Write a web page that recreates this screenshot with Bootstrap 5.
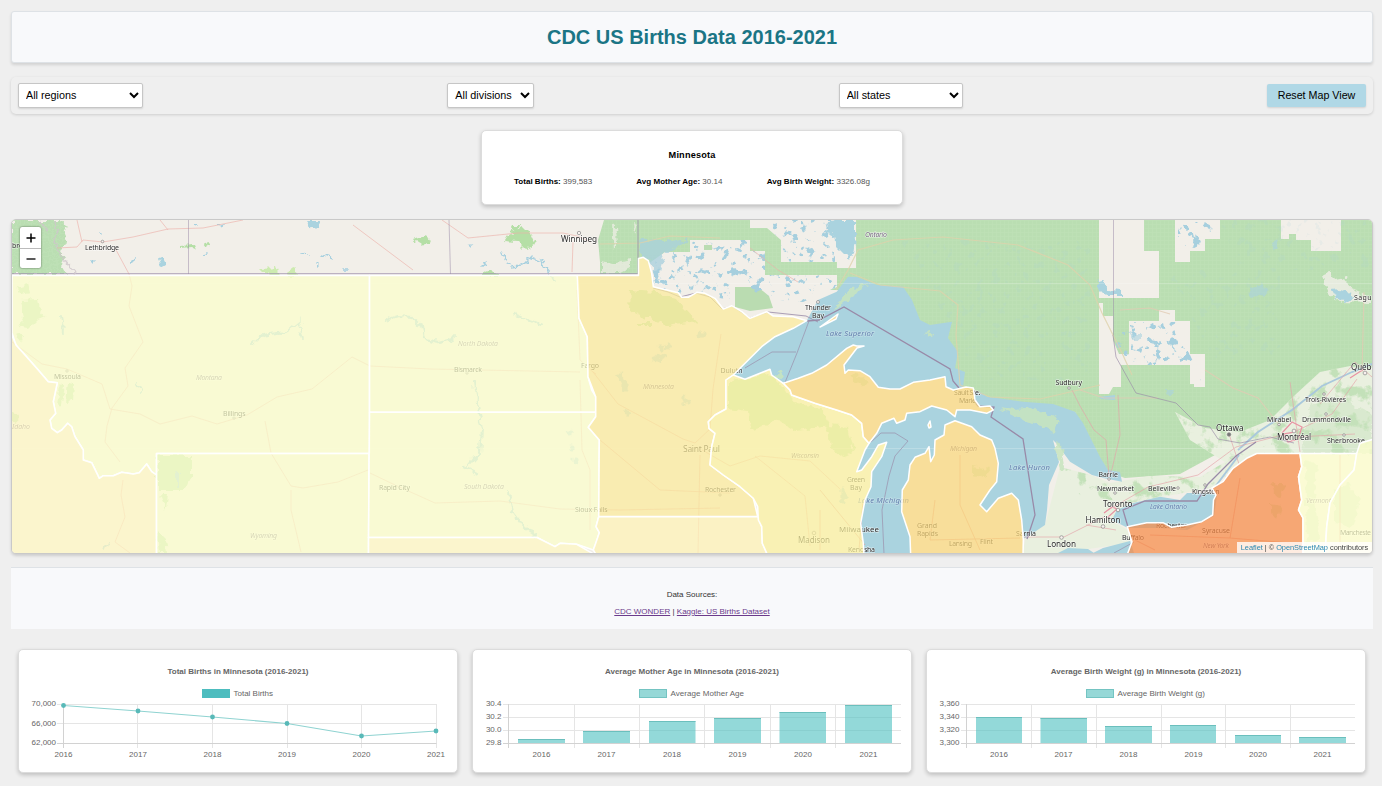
<!DOCTYPE html>
<html lang="en">
<head>
<meta charset="utf-8">
<meta name="viewport" content="width=device-width, initial-scale=1">
<title>CDC US Births Data 2016-2021</title>
<link href="https://cdn.jsdelivr.net/npm/bootstrap@5.3.0/dist/css/bootstrap.min.css" rel="stylesheet">
<style>
  body { background:#efefef; font-family:"Liberation Sans",Arial,sans-serif; padding:11px 9px 0 11px; color:#333; overflow:hidden; height:786px; }
  .page-head { height:52px; background:#f8f9fb; border:1px solid #dee2e6; border-radius:3px; box-shadow:0 2px 3px rgba(0,0,0,.12); }
  .page-head h1 { font-size:20px; font-weight:700; color:#1b7585; }
  .filters { height:37px; margin-top:14px; padding:0 7px; border-radius:5px; box-shadow:0 1px 3px rgba(0,0,0,.14); }
  .filters select { height:25px; border:1px solid #c6c6c6; border-radius:2px; background:#fff; font-size:10.8px; color:#000; padding:0 3px 1px; box-shadow:0 1px 2px rgba(0,0,0,.12); }
  .reset-btn { width:99px; height:23px; background:#b0d8e6; border-radius:2px; font-size:10.7px; color:#000; box-shadow:0 1px 2px rgba(0,0,0,.12); }
  .panel { background:#fff; border:1px solid #dcdcdc; border-radius:5px; box-shadow:0 2px 4px rgba(0,0,0,.2); }
  .state-info { width:422px; height:75px; margin-top:16px; padding:18px 32px 0; font-size:8.05px; }
  .state-info h2 { font-size:9.2px; font-weight:700; color:#000; letter-spacing:.15px; line-height:12px; margin-bottom:15px; }
  .state-info b { color:#000; }
  .state-info span { color:#555; line-height:12px; }
  .map-frame { height:335px; margin-top:14px; border:1px solid #c9c9c9; border-radius:5px; background:#f2efe9; box-shadow:0 2px 3px rgba(0,0,0,.14); }
  .map-frame > svg { width:100%; height:100%; }
  .map-frame text { font-family:"Noto Sans",sans-serif; }
  .zoomer { left:8px; top:7px; width:21px; border-radius:2px; box-shadow:0 0 2px rgba(0,0,0,.6); background:#fff; }
  .zoomer span { height:21px; }
  .zoomer span + span { height:20px; border-top:1px solid #bbb; }
  .zoomer svg { width:10px; height:10px; }
  .attribution { right:0; bottom:0; width:135px; height:11px; line-height:11px; font-size:7.4px; letter-spacing:-.03px; background:rgba(255,255,255,.78); color:#444; white-space:nowrap; }
  .attribution a { color:#2a86b0; text-decoration:none; }
  .sources { height:62px; margin-top:13px; background:#f8f9fb; border-top:1px solid #dee2e6; font-size:8px; line-height:17px; padding-top:18px; }
  .sources a { color:#6b3a8b; }
  .charts { margin:20px 7px 0; gap:14px; }
  .chart-card { height:124px; min-width:0; }
  .chart-card svg { display:block; width:438px; height:122px; }
  .chart-card text { font-family:"Liberation Sans",Arial,sans-serif; font-size:8px; fill:#666; }
</style>
</head>
<body>
<header class="page-head d-flex align-items-center justify-content-center"><h1 class="m-0">CDC US Births Data 2016-2021</h1></header>

<section class="filters d-flex align-items-center justify-content-between">
  <select style="width:125px" aria-label="Region"><option>All regions</option></select>
  <select style="width:87px" aria-label="Division"><option>All divisions</option></select>
  <select style="width:124px" aria-label="State"><option>All states</option></select>
  <button class="btn reset-btn border-0 p-0" type="button">Reset Map View</button>
</section>

<section class="panel state-info mx-auto text-center">
  <h2>Minnesota</h2>
  <div class="d-flex justify-content-between">
    <span><b>Total Births:</b> 399,583</span><span><b>Avg Mother Age:</b> 30.14</span><span><b>Avg Birth Weight:</b> 3326.08g</span>
  </div>
</section>

<section class="map-frame position-relative overflow-hidden">
<svg viewBox="12 220 1360 333" preserveAspectRatio="none" class="d-block">
  <defs>
    <pattern id="weave" width="4" height="4" patternUnits="userSpaceOnUse"><rect width="4" height="4" fill="#badeb2"/><path d="M0 .5H4M.5 0V4" stroke="#bfe0b7" stroke-width=".6"/></pattern>
    <filter id="lakes" x="0" y="0" width="1" height="1" color-interpolation-filters="sRGB">
      <feTurbulence type="fractalNoise" baseFrequency=".13" numOctaves="3" seed="7"/>
      <feColorMatrix values="0 0 0 0 .65  0 0 0 0 .81  0 0 0 0 .87  14 0 0 0 -8.400"/>
      <feComposite in2="SourceAlpha" operator="in"/>
    </filter>
    <filter id="clearings" x="0" y="0" width="1" height="1" color-interpolation-filters="sRGB">
      <feTurbulence type="fractalNoise" baseFrequency=".07" numOctaves="5" seed="3"/>
      <feColorMatrix values="0 0 0 0 .73  0 0 0 0 .87  0 0 0 0 .69  7 0 0 0 -3.700"/>
      <feComposite in2="SourceAlpha" operator="in"/>
    </filter>
    <filter id="rough" x="-.1" y="-.1" width="1.200" height="1.200">
      <feTurbulence type="fractalNoise" baseFrequency=".15" numOctaves="2" seed="4"/>
      <feDisplacementMap in="SourceGraphic" scale="9" xChannelSelector="R" yChannelSelector="G"/>
    </filter>
    <path id="wi" d="M733.300 375L745 379.300 770 369.300 771.700 375 783.300 383.300 790 390 791.700 395 815 403.300 836.700 410 851.700 415 861.700 423.300 863.300 436.700 869 443.300 865 450 856.700 471.700 861.700 470 871.700 456.700 878.300 445 886.700 442.300 881.700 456.700 871.700 471.700 871 486.700 865 500 860.700 523.300 863.300 543.300 864 556H768L762.300 543.300 761.700 526.700 758.300 520 757.700 506.700 753.300 498.300 740 486.700 723.300 475 710 465 711.700 446.700 715 433.300 709 428.300 708.300 421.700 715 415 726 409V380Z"/>
    <path id="up" d="M783.300 383.300L798.300 378.300 811.700 373.300 826.700 365 846.700 348.300 853.300 345 856.700 346 864 346 857 348 844 365 845 373.300 848.300 370 860 370.700 870 376.700 878.300 387.300 890 389H900L913.300 382.300 930 380 945 376.700 946 386.700 953.300 390 966 387 973.300 388 975 400 980 406.700 990 406 993.300 410 986.700 413.300 970 410H956.700L955 416.700 946.700 410 931.700 406 920 411.700 906.700 413.300 905 420 896.700 423.300 894 418.300 881.700 423.300 876.700 433.300 869 443.300 863.300 436.700 861.700 423.300 851.700 415 836.700 410 815 403.300 791.700 395 790 390Z"/>
    <path id="lp" d="M910.700 556L910 536.700 901.700 511.700 902.300 490 908.300 480 910 465 915 457.300 925 453.300 929 446.700 930.700 461.700 934.300 455 935 440 944 435 945 425 955 420.700 971.700 426.700 980 435 991.700 440 995 448.300 998.300 463.300 996.700 481.700 990 490 980 505 986.700 511.700 998.300 498.300 1011.700 493.300 1018.300 500 1021.700 520 1023.300 540 1023 556ZM820 327L838 314 836 319 822 326ZM928 425l2-4 1 6-2 1z"/>
    <path id="mn" d="M577.300 275.500H638.500V258.500L643.300 257.300 648.300 260.700 651.700 273.300 653.300 286.700 666.700 290 678.300 292.700 681.700 297.300H688.300L696.700 292.300 705 293.300 715 298.300 723.300 309 731.700 305.700 741.700 311.700 750 318.300 766.700 311.700 773.300 316 793.300 316.700 806.700 320.700 793.300 328.300 775 336.700 761.700 346.700 743.300 365 733.300 375 726 380V409L715 415 708.300 421.700 709 428.300 715 433.300 711.700 446.700 710 465 723.300 475 740 486.700 753.300 498.300 757.700 516.500H598.700L599.300 440 588.300 427.300 595.700 416.700V396.700L588 376.700 587.300 336.700 579 318.300Z"/>
  </defs>
  <rect x="12" y="220" width="1360" height="333" fill="#f2efe9"/>
  <!-- forests -->
  <g fill="url(#weave)">
    <path d="M12 220H60L67 226 63 235 67 243 60 250 65 258 63 267 67 274H12Z" filter="url(#rough)"/>
    <path d="M604 220H1372V368L1330 374 1305 400 1290 420 1262 440 1240 455 1225 444 1190 428 1215 455 1180 474 1125 478 1100 470 1075 412 960 397 850 290H640V274H600V262L598 240Z"/>
  </g>
  <g fill="#f2efe9">
    <path d="M1099 220H1144V251H1159V298H1099Z"/>
    <path d="M1175 220H1220V239H1205V251H1190V262H1175Z"/>
    <path d="M1281 220H1341V251H1311V240H1296V234H1289V239H1281Z"/>
    <path d="M1099 303H1103V316H1113V340L1119 354H1129V321H1159V310H1175V321H1190V354H1205V387H1194V384H1190V365H1121V387H1113L1109 394H1099Z"/>
    <path d="M1322 276L1330 272 1335 280 1345 278 1352 290 1372 298V303L1340 302 1330 294Z" opacity=".8" filter="url(#rough)"/>
    <path d="M750 220H856V268H837V262H781V240L767 228H750Z"/>
    <path d="M648 264L665 252H690V240H750V251H765V275H837V287L813 297 803 302V325H735L640 310V274Z"/>
    <path d="M612 224l4 2 2 16-4 8zM634 222l4 2-3 10zM602 262l12 2 16-4v8l-10 5h-18z" opacity=".7" filter="url(#rough)"/>
  </g>
  <path d="M735 287H758L769 296 773 308 750 311 735 307ZM704 245h8v5h-8z" fill="#badcb1"/>
  <path d="M645 264L665 252H690V240H750V251H765V275H837V287L803 302 780 300 735 286V300L653 290ZM775 220H835V262H790L770 230Z" filter="url(#lakes)"/>
  <path d="M1178 222H1215V238L1190 250H1178ZM1115 340L1131 322H1175L1190 355 1204 385 1190 365H1121Z" filter="url(#lakes)"/>
  <path d="M900 240H1090V380H980ZM1165 270H1280V360H1215ZM1220 220H1370V270H1240Z" filter="url(#lakes)" opacity=".12"/>
  <path d="M640 238L672 242 690 238 664 254 656 284 652 262 641 256Z" fill="#a8d0de" opacity=".75" filter="url(#rough)"/>
  <g fill="#e9f0df">
    <path d="M1060 467L1091 475 1110 483 1150 476 1200 477 1225 462 1190 440 1175 412 1205 428 1240 432 1270 420 1295 395 1320 372 1350 366 1372 370V445L1356 454H1255L1230 470 1215 487 1130 503 1110 520 1128 530 1130 543 1040 556H1022L1026 536 1045 525Z"/>
  </g>
  <path d="M1060 467L1091 475 1110 483 1150 476 1200 477 1225 462 1190 440 1175 412 1205 428 1240 432 1270 420 1295 395 1320 372 1350 366 1372 370V454H1255L1215 487 1130 503 1080 495Z" filter="url(#clearings)" opacity=".8"/>
  <path d="M1310 405L1335 395 1372 415V453H1302Z" fill="#c7e2bc" opacity=".45" filter="url(#rough)"/>
  <!-- small woods and parks -->
  <g fill="#b5dfa6" filter="url(#rough)">
    <path d="M414 239l8-3 8 3-2 5-10 1zM481 275q9-8 19 0v2h-19zM508 235l15-8 8 8 4 9-10 5-8-8-12-1zM510 225h10l-2 6h-5z"/>
    <path d="M181 246l14-1 2 5-6-3-10 1zM204 244l4-1-1 5z"/><path d="M261 268l15-1 3 9-9 1zM287 271l8-3 3 9h-9z" fill="#cdebb0"/>
    <path d="M630 288l25 2 20 6 22 26-30 4-24-10-14-6zM636 322h14v3h-14z" opacity=".85"/>
    <path d="M17 288l10-3 2 8-8 2zM20 300l18-1 2 12 6 7-10 2-8 8-9-1 4-8zM16 334q5-3 8 3-2 5-6 3zM60 383l5 3-4 22-4-5zM68 383l6 1-1 16-7 4zM158 455h33v20l-6 14h-27zM12 411l6 2-1 10-5-2zM160 495h8l-2 14zM157 531l8 8 2 14h-8z" opacity=".8"/>
  </g>
  <!-- water -->
  <g fill="#aad3df">
    <path d="M724 382L735 360 765 335 806.700 320.700 818 300 836.700 291.700 848 276.700 857 277 877 285 903 286.700 912 300 920 320 930 325 952 321.700 948 338 958 352 955 368 965 372 963 387 980 392 987 396.700 1023 401.700 1053 404 1075 411.700 1083 423 1100 457 1108 470 1120 472 1122 481.700 1103 478 1092 475 1070 461.700 1057 444 1053 440 1059 462 1049 485 1047 510 1045 525 1030 535 1026 538 1010 540 940 556H856L850 470 800 400Z"/>
    <path d="M1111.700 520L1117 510 1133 503 1160 496.700 1180 500 1187 493 1207 493 1217 495 1214 516 1187 530 1157 528 1128 528Z"/>
    <path d="M1093 553L1103 548 1130 541 1134 553ZM1058 553l10-5 20 1 6 4z"/>
    <path d="M1099 397l16-2v5l-14-1z"/>
    <path d="M830 222l7-2h18v18l-2 16-5 6-4-6-6-6-4-14-8-2zM1332 290l8-1 11 3 2 6-6 4-10-3zM1097 281l7-1 4 9 14 2v5h-16l-9-9zM306 221h13l-1 8-7-1zM158 260l4-2 3 6-5 3z" filter="url(#rough)"/>
    <path d="M1250 288l14-4 6 8-12 6-10-2zM1270 244l8-3-2 8zM1132 334h9v5l-9 1zM1165 390h10v4h-8z" opacity=".6" filter="url(#rough)"/>
  </g>
  <g fill="#f2efe9"><use href="#mn"/><use href="#wi"/><use href="#up"/><use href="#lp"/></g>
  <g fill="#b5dfa6" filter="url(#rough)">
    <path d="M630 290l25 2 20 6 22 24-30 4-24-10-14-6zM638 323h14v3h-14z" opacity=".85"/>
    <path d="M728 382l42-9 10 10 15 20 25 5 10 18-35 5-15-10-30 10-2-20-20-3zM828 425l20 2 6 24-14 6-10-8z" opacity=".7"/>
    <path d="M850 374l10 2 10 7-14 2zM1272 482l14 3-6 12-6-4zM1270 504l12 2-4 12-8-5zM972 466l18 3-6 8-12-3z" opacity=".5"/>
    <path d="M1305 460l12 3-2 35 4 40-12 8zM1335 490l14-6 12 16-10 28-16-6z" opacity=".35"/>
  </g>
  <g stroke="#a7d0df" fill="none" stroke-linecap="round" filter="url(#rough)">
    <path d="M502 252l8 14 12-1 8-8 10 4 10 12 4 8M482 266l5-2M470 246l2-3" stroke-width="1.600"/>
    <path d="M302 254l6 1M322 255l10 4M316 265l1 1M342 269h6M207 254l-4 1M132 262l3-2M94 261l-2 2M100 232l1 1M195 225l3 1M218 225l5-2" stroke-width="1.700"/>
    <path d="M386 320l12-4 14 1 10 10 2 12 16 3 16-4M420 323l3 8M515 314l12 5 14 6M474 382l4 26 4 22-2 22-12 14M462 466l16 8M508 492l5 20 12 16 12 8" stroke-width="2.200"/>
    <path d="M252 344l10-9 24-3 14-11-2 5 5 12M136 382l6 10M62 316l2 16M104 550l4-10M178 472v14" stroke-width="2"/>
    <path d="M658 358l5-2M660 348h2M668 346h1M620 376l6 12M684 398l2 4M626 412h4M570 432v2M572 448v1M575 460h1M843 490v10M700 334h4M655 360h2" stroke-width="5" opacity=".7"/>
  </g>
  <path d="M1238 450l20-18 34-22 30-24 30-14 20-8M1215 487l24-32" stroke-width="1.900" stroke="#a9c8dc" fill="none"/>
  <path d="M842 298l10-11 20-3-14 5-6 8-18 14zM1000 408l15 2 20-2 24 12-4 14-14-9-18-5zM775 375l7-4 3 5-7 3zM922 333l10-1-2 3zM1055 442l6 3 4 20-5 6z" fill="#c8e4bf" opacity=".85" filter="url(#rough)"/>
  <path d="M12 283.500H1372M12 448.500H1372" stroke="#fff" stroke-width=".6" opacity=".35"/>
  <!-- roads -->
  <g fill="none" stroke="#ecb1aa" stroke-width=".8" opacity=".8">
    <path d="M57 248l20-1 6-7 20 2 30-5 35-8 35-1 40-8M77 220l5 22M160 220l8 10M115 248l14 26 3 12-3 20 14 36-18 26 3 18-16 22-5 18-2 16 15 20M12 342l30 22 25 5 35 15 8 25 30 5 20 10 32-8 25 8 30-9 30-18 35-8 40-32 18 9 60 3 150 3M442 220l26 18 50-5 45 0 14 3 14 6M573 242l-1 30M353 225l60 45M577 290l3 70 13 12 25 32 65 35 12 4 15-14 3-40 8-55M580 380l2 70 8 20v60M370 473l25 12 40 18 65-2 60 8 60 1 100-2M265 421l6 32 20 33 12 2 35-6 30-12M291 490v20l10 42M593 372l3 2M700 455l-2 98M702 450l28 16 30-10 50 5 30 28M755 456l50 40 5 50M600 440l60 50 70 3M123 480l-2 15 4 22-10 25 15 11M750 248l28 22 20 12"/>
    <path d="M600 244l40-1 30-7 50 2M836 290l12-20 10-20 35-10 50-3 75 8 50 20 22 20 12 28 20 40 10 22M850 273l30 12 60 6 18 14-2 30 4 50 30 12 50 2 60-14" stroke="#dfd2ac" stroke-width="1.200"/>
    <path d="M1080 390l24 8 14 0 40 0M1120 310l30-2 20 6M1205 370l28 18 25 10 22 28M1362 372l2-80" stroke="#e2cbb4" stroke-width="1.100"/>
    <path d="M1072 390l8 16 14 24 12 10 3 36M1118 395l2 40-8 34-4 8M1229 434l10 30M1108 510l40-23 50-12 38-28 58-15 38-18 25-35M1086 525l30 5M1024 537h40l40-20M1295 437l60-3M1300 452l-10-70M1320 404l35-42 17 15" stroke="#e5a2a8"/>
    <path d="M820 490l45 55M863 500l-4 50M960 455v50l20 45M935 500l-5 40 90-2M1150 535l80 3 60 5M1230 538l10-60M1135 540l20 10M820 510v40M1340 455v98" stroke="#e5958a"/>
  </g>
  <path d="M1282 433l10-11 10 5-4 12-10 3-5-8 12-2M1104 513l8-6 5 2-10 9M1350 378l14-9" fill="none" stroke="#e892a2" stroke-width="1.200"/>
  <g fill="none" stroke="#998aa8" stroke-width="1">
    <path d="M12 273.700H638V220" opacity=".75"/><path d="M188.500 220V274M449 220l1.500 54M1113.500 220V335" opacity=".5"/><path d="M1113 335l3 22 20 36 40 10 22 22 12 2 8 12 22 4 30-6 24 6" opacity=".65"/>
    <path d="M653 288l15 4 12 5 16-4 14 4 12 12 10-3 18 12 18-6 38 4 12 6" opacity=".8"/>
    <path d="M807 321l12-1 25-13 106 62 3 12 6 7M973 400l5 6 16 1-3 10 32 22 12 76-8 24M1128 527l-5-17 22-9h52l11-17 28-28 20-14" stroke-width="1.300"/>
    <path d="M745 368l27-16h24M809 321l-12 32-13 32M871 442l10-9h14l13 8-13 15-6 20-7 34 2 44M1134 542l-20 11" opacity=".65"/>
  </g>
  <path d="M56 220l2 12-4 10 8 14 14 18M40 220l8 12" fill="none" stroke="#cfc6cb" stroke-width="1.500" opacity=".8" filter="url(#rough)"/>
  <!-- settlements -->
  <g fill="#f8f1ee" stroke="#888" stroke-width=".7">
    <circle cx="102.500" cy="241.500" r="1.300"/><circle cx="579" cy="233" r="1.700"/><circle cx="818" cy="302" r="1.500"/><circle cx="1069" cy="388" r="1.300"/><circle cx="1229" cy="434.500" r="1.800" fill="#777"/><circle cx="1294" cy="431" r="1.900"/><circle cx="1365" cy="373" r="1.900"/><circle cx="1118" cy="510" r="1.800"/><circle cx="1103" cy="526.500" r="1.800"/><circle cx="1061.500" cy="537.500" r="1.800"/><circle cx="1109" cy="479" r="1.300"/><circle cx="1115" cy="493" r="1.300"/><circle cx="1178" cy="488" r="1.300"/><circle cx="1205" cy="485" r="1.300"/><circle cx="1324" cy="394" r="1.300"/><circle cx="1326" cy="414" r="1.300"/><circle cx="1344" cy="435" r="1.300"/><circle cx="1279" cy="424.500" r="1.300"/><circle cx="814" cy="533" r="1.800"/><circle cx="720" cy="495" r="1.200"/><circle cx="467" cy="373" r="1.200"/><circle cx="234" cy="418" r="1.200"/><circle cx="67" cy="371" r="1.200"/>
  </g>
  <g fill="#2b2b2b" stroke="#fff" stroke-opacity=".65" stroke-width="1.200" paint-order="stroke" font-size="7">
    <text x="12" y="248">bro</text><text x="85" y="250" textLength="34">Lethbridge</text><text x="561" y="242" font-size="8.200" textLength="36">Winnipeg</text>
    <text x="805" y="310" textLength="26">Thunder</text><text x="812" y="318">Bay</text><text x="720.500" y="373" textLength="22">Duluth</text>
    <text x="54" y="379" textLength="27">Missoula</text><text x="223" y="416" textLength="22.500">Billings</text><text x="454" y="371.500" textLength="28">Bismarck</text><text x="581" y="368" textLength="18">Fargo</text>
    <text x="379" y="489.500" textLength="31">Rapid City</text><text x="575" y="512" textLength="32.500">Sioux Falls</text><text x="683" y="452" font-size="8.500" textLength="37">Saint Paul</text><text x="705" y="492" textLength="31">Rochester</text>
    <text x="847" y="482" textLength="18">Green</text><text x="850" y="490">Bay</text><text x="839" y="532" font-size="7.900" textLength="40">Milwaukee</text><text x="848" y="551.500" textLength="27">Kenosha</text><text x="798" y="543" font-size="8" textLength="32">Madison</text>
    <text x="917" y="528" textLength="20">Grand</text><text x="917" y="536" textLength="21">Rapids</text><text x="949" y="546" textLength="23">Lansing</text><text x="980" y="544" textLength="13">Flint</text><text x="1016" y="536" textLength="20">Sarnia</text>
    <text x="1055.500" y="385" textLength="26.500">Sudbury</text><text x="954" y="395" textLength="26.500">Sault Ste.</text><text x="959" y="403" textLength="17">Marie</text>
    <text x="1216" y="431" font-size="8.200" textLength="27.500">Ottawa</text><text x="1267" y="422" textLength="24">Mirabel</text><text x="1302" y="422" textLength="49">Drummondville</text><text x="1305" y="402" textLength="41">Trois-Rivières</text><text x="1277" y="440" font-size="8.200" textLength="34">Montréal</text><text x="1327" y="443" textLength="38">Sherbrooke</text><text x="1351" y="370" font-size="8" textLength="20.500">Québ</text><text x="1354" y="299.500" textLength="17.500">Sagu</text>
    <text x="1098.500" y="477" textLength="19.500">Barrie</text><text x="1097" y="491" textLength="37">Newmarket</text><text x="1148" y="491" textLength="28">Belleville</text><text x="1192" y="493.500" textLength="27.500">Kingston</text><text x="1103" y="507" font-size="8.200" textLength="29.500">Toronto</text><text x="1085.500" y="523" font-size="8.200" textLength="35">Hamilton</text><text x="1122" y="539.500" textLength="22">Buffalo</text><text x="1047" y="547" font-size="8.200" textLength="29">London</text>
    <text x="1156" y="528" textLength="31">Rochester</text><text x="1202" y="533" textLength="28">Syracuse</text><text x="1340" y="535" textLength="31">Mancheste</text>
    <g font-style="italic" fill="#786a82"><text x="865" y="237" textLength="22">Ontario</text><text x="12" y="429" textLength="18">Idaho</text><text x="196" y="380" textLength="26">Montana</text><text x="250" y="538" textLength="27">Wyoming</text><text x="458" y="346" textLength="40">North Dakota</text><text x="464" y="489" textLength="40">South Dakota</text><text x="643" y="389" textLength="31">Minnesota</text><text x="791" y="458" textLength="28">Wisconsin</text><text x="950" y="451" textLength="27">Michigan</text><text x="1203" y="548" textLength="26">New York</text><text x="1306" y="503" textLength="25">Vermont</text></g>
    <g font-style="italic" fill="#6480ae" stroke-opacity=".3" font-size="7.700"><text x="826" y="336" textLength="48">Lake Superior</text><text x="858" y="503" textLength="51">Lake Michigan</text><text x="1009" y="470" textLength="41">Lake Huron</text><text x="1150" y="509" font-size="6.600" textLength="37">Lake Ontario</text></g>
  </g>
  <!-- choropleth -->
  <g stroke="#fff" stroke-width="1.500" stroke-linejoin="round" fill-opacity=".72">
    <path fill="#fbfeca" d="M12 275.500H369.500V453.500H156.500V475L151.700 471.700 146.700 464 139.300 472.700 133.300 474 121.700 472.300 113.300 475.700H103.300L99.300 478.300 91.700 462.700 83.300 460V450L75 436.700 71.700 426.700 67.700 423.300 61.700 430 57.300 432.700 51.700 428.300 50 420 55.700 413.300 53.300 401.700 57.300 382.700 48.300 381.700 36.700 368.300 25 355 16 345 12 333Z"/>
    <path fill="#fdf7c2" d="M10 331L16 345 25 355 36.700 368.300 48.300 381.700 57.300 382.700 53.300 401.700 55.700 413.300 50 420 51.700 428.300 57.300 432.700 61.700 430 67.700 423.300 71.700 426.700 75 436.700 83.300 450V460L91.700 462.700 99.300 478.300 103.300 475.700H113.300L121.700 472.300 133.300 474 139.300 472.700 146.700 464 151.700 471.700 156.500 475V556H10Z"/>
    <path fill="#fbfeca" d="M156.500 453.500H369L368.500 556H156.500Z"/>
    <path fill="#fbfeca" d="M369.500 275.500H577.300L579.300 290 579 318.300 587.300 336.700 588 376.700 591.700 390 595.700 396.700V412.300H369.500Z"/>
    <path fill="#fbfeca" d="M369.500 412.300H595.700V416.700L588.300 427.300 599.300 440 598.700 516.700 596 526.700 599.300 532.700 596 543.300 593.300 550 576.700 544.300 560 543.300 555 546.700 537 537.500H368.500Z"/>
    <path fill="#fdf7c2" d="M368.500 537.500H537L555 546.700 560 543.300 576.700 544.300 597 556H368.500Z"/>
    <use href="#mn" fill="#fbea9b"/>
    <path fill="#fdf3b6" d="M598.700 516.700H758.300L761.700 526.700 762.300 543.300 768 556H597L593.300 550 599.300 532.700 596 526.700Z"/>
    <use href="#wi" fill="#fbf1a0"/>
    <use href="#up" fill="#fad77c"/>
    <use href="#lp" fill="#fad77c"/>
    <path fill="#f78b46" d="M1126.700 556L1132 541.700 1127.300 526.700 1146.700 522.700H1163L1171.700 527.300 1186.700 525 1201.700 521.700 1212.700 515 1213.500 500 1216 495 1212 488 1223 481.700 1233 468.300 1246.700 458.300 1256.700 453.500H1300L1301.700 466.700 1298.500 476.700 1301.700 500 1298.500 510 1303 518V556Z"/>
    <path fill="#fdffcc" d="M1300 453.500H1356.700L1354 470 1340 485 1330 503 1326.700 526.700 1325 556H1303V518L1298.500 510 1301.700 500 1298.500 476.700 1301.700 466.700Z"/>
    <path fill="#fdffcc" d="M1356.700 453.500L1360 443.300 1374 439V556H1325L1326.700 526.700 1330 503 1340 485 1354 470Z"/>
  </g>
</svg>
<div class="zoomer position-absolute">
  <span class="d-flex align-items-center justify-content-center"><svg viewBox="0 0 10 10"><path d="M5 .5V9.500M.5 5H9.500" stroke="#000" stroke-width="1.500"/></svg></span>
  <span class="d-flex align-items-center justify-content-center"><svg viewBox="0 0 10 10"><path d="M.5 5H9.500" stroke="#000" stroke-width="1.300"/></svg></span>
</div>
<div class="attribution position-absolute text-center"><a href="#">Leaflet</a> | © <a href="#">OpenStreetMap</a> contributors</div>
</section>

<section class="sources text-center">
  <div>Data Sources:</div>
  <div><a href="#">CDC WONDER</a> | <a href="#">Kaggle: US Births Dataset</a></div>
</section>

<section class="charts d-flex">
  <div class="panel chart-card flex-fill">
    <svg viewBox="19 650 438 122">
      <text x="238" y="674" text-anchor="middle" font-weight="700" textLength="141">Total Births in Minnesota (2016-2021)</text>
      <rect x="202" y="689" width="28" height="9" fill="#4dbdbf"/><text x="233.500" y="696" textLength="39.500">Total Births</text>
      <path d="M57 704.500H436.500M57 723.500H436.500M137.500 704V748M212.500 704V748M287.500 704V748M361.500 704V748M436.500 704V748" stroke="#e5e5e5" fill="none"/><path d="M57 743.500H436.500M63.500 704V748" stroke="#d2d2d2"/>
      <path d="M63.500 705.500L138 711 212.500 717 287 723.500 361.500 736 436 731" fill="none" stroke="#8fd3d1" stroke-width="1.100"/>
      <g fill="#58b9b8"><circle cx="63.500" cy="705.500" r="2.400"/><circle cx="138" cy="711" r="2.400"/><circle cx="212.500" cy="717" r="2.400"/><circle cx="287" cy="723.500" r="2.400"/><circle cx="361.500" cy="736" r="2.400"/><circle cx="436" cy="731" r="2.400"/></g>
      <g text-anchor="end"><text x="56" y="706">70,000</text><text x="56" y="726">66,000</text><text x="56" y="745">62,000</text></g>
      <g text-anchor="middle"><text x="63.500" y="757">2016</text><text x="138" y="757">2017</text><text x="212.500" y="757">2018</text><text x="287" y="757">2019</text><text x="361.500" y="757">2020</text><text x="436" y="757">2021</text></g>
    </svg>
  </div>
  <div class="panel chart-card flex-fill">
    <svg viewBox="473 650 438 122">
      <text x="692" y="674" text-anchor="middle" font-weight="700" textLength="174">Average Mother Age in Minnesota (2016-2021)</text>
      <rect x="639.500" y="689.500" width="27" height="8" fill="#96d8d7" stroke="#74c4c2"/><text x="670.500" y="696" textLength="73.500">Average Mother Age</text>
      <path d="M503 704.500H901M503 717.500H901M503 730.500H901M574.500 704V748M639.500 704V748M704.500 704V748M770.500 704V748M835.500 704V748" stroke="#e5e5e5" fill="none"/><path d="M503 743.500H901M508.500 704V748" stroke="#d2d2d2"/>
      <g fill="#4bc0c0" fill-opacity=".6"><path d="M518 739h47v4h-47zM583 731.500h47V743h-47zM649 721h46.500v22H649zM714 718h47v25h-47zM779.500 712H826v31h-46.500zM845 705h47v38h-47z"/></g>
      <path d="M518 739.500h47M583 731.500h47M649 721.500h46.500M714 718.500h47M779.500 712.500H826M845 705.500h47" stroke="#6bbfbd"/>
      <g text-anchor="end"><text x="501.500" y="706">30.4</text><text x="501.500" y="719">30.2</text><text x="501.500" y="732">30.0</text><text x="501.500" y="745">29.8</text></g>
      <g text-anchor="middle"><text x="541.500" y="757">2016</text><text x="606.500" y="757">2017</text><text x="672" y="757">2018</text><text x="737.500" y="757">2019</text><text x="803" y="757">2020</text><text x="868.500" y="757">2021</text></g>
    </svg>
  </div>
  <div class="panel chart-card flex-fill">
    <svg viewBox="927 650 438 122">
      <text x="1146" y="674" text-anchor="middle" font-weight="700" textLength="190.500">Average Birth Weight (g) in Minnesota (2016-2021)</text>
      <rect x="1086.500" y="689.500" width="27" height="8" fill="#96d8d7" stroke="#74c4c2"/><text x="1117.500" y="696" textLength="87.500">Average Birth Weight (g)</text>
      <path d="M961 704.500H1355M961 717.500H1355M961 730.500H1355M1031.500 704V748M1096.500 704V748M1161.500 704V748M1225.500 704V748M1290.500 704V748" stroke="#e5e5e5" fill="none"/><path d="M961 743.500H1355M966.500 704V748" stroke="#d2d2d2"/>
      <g fill="#4bc0c0" fill-opacity=".6"><path d="M976 717h46v26h-46zM1040.500 718h46.500v25h-46.500zM1105 726h47v17h-47zM1170 725h46v18h-46zM1235 735h46v8h-46zM1299 737h47v6h-47z"/></g>
      <path d="M976 717.500h46M1040.500 718.500h46.500M1105 726.500h47M1170 725.500h46M1235 735.500h46M1299 737.500h47" stroke="#6bbfbd"/>
      <g text-anchor="end"><text x="959.500" y="706">3,360</text><text x="959.500" y="719">3,340</text><text x="959.500" y="732">3,320</text><text x="959.500" y="745">3,300</text></g>
      <g text-anchor="middle"><text x="999" y="757">2016</text><text x="1063.500" y="757">2017</text><text x="1128.500" y="757">2018</text><text x="1193.500" y="757">2019</text><text x="1258" y="757">2020</text><text x="1322.500" y="757">2021</text></g>
    </svg>
  </div>
</section>
<script src="https://cdn.jsdelivr.net/npm/bootstrap@5.3.0/dist/js/bootstrap.bundle.min.js"></script>
</body>
</html>
